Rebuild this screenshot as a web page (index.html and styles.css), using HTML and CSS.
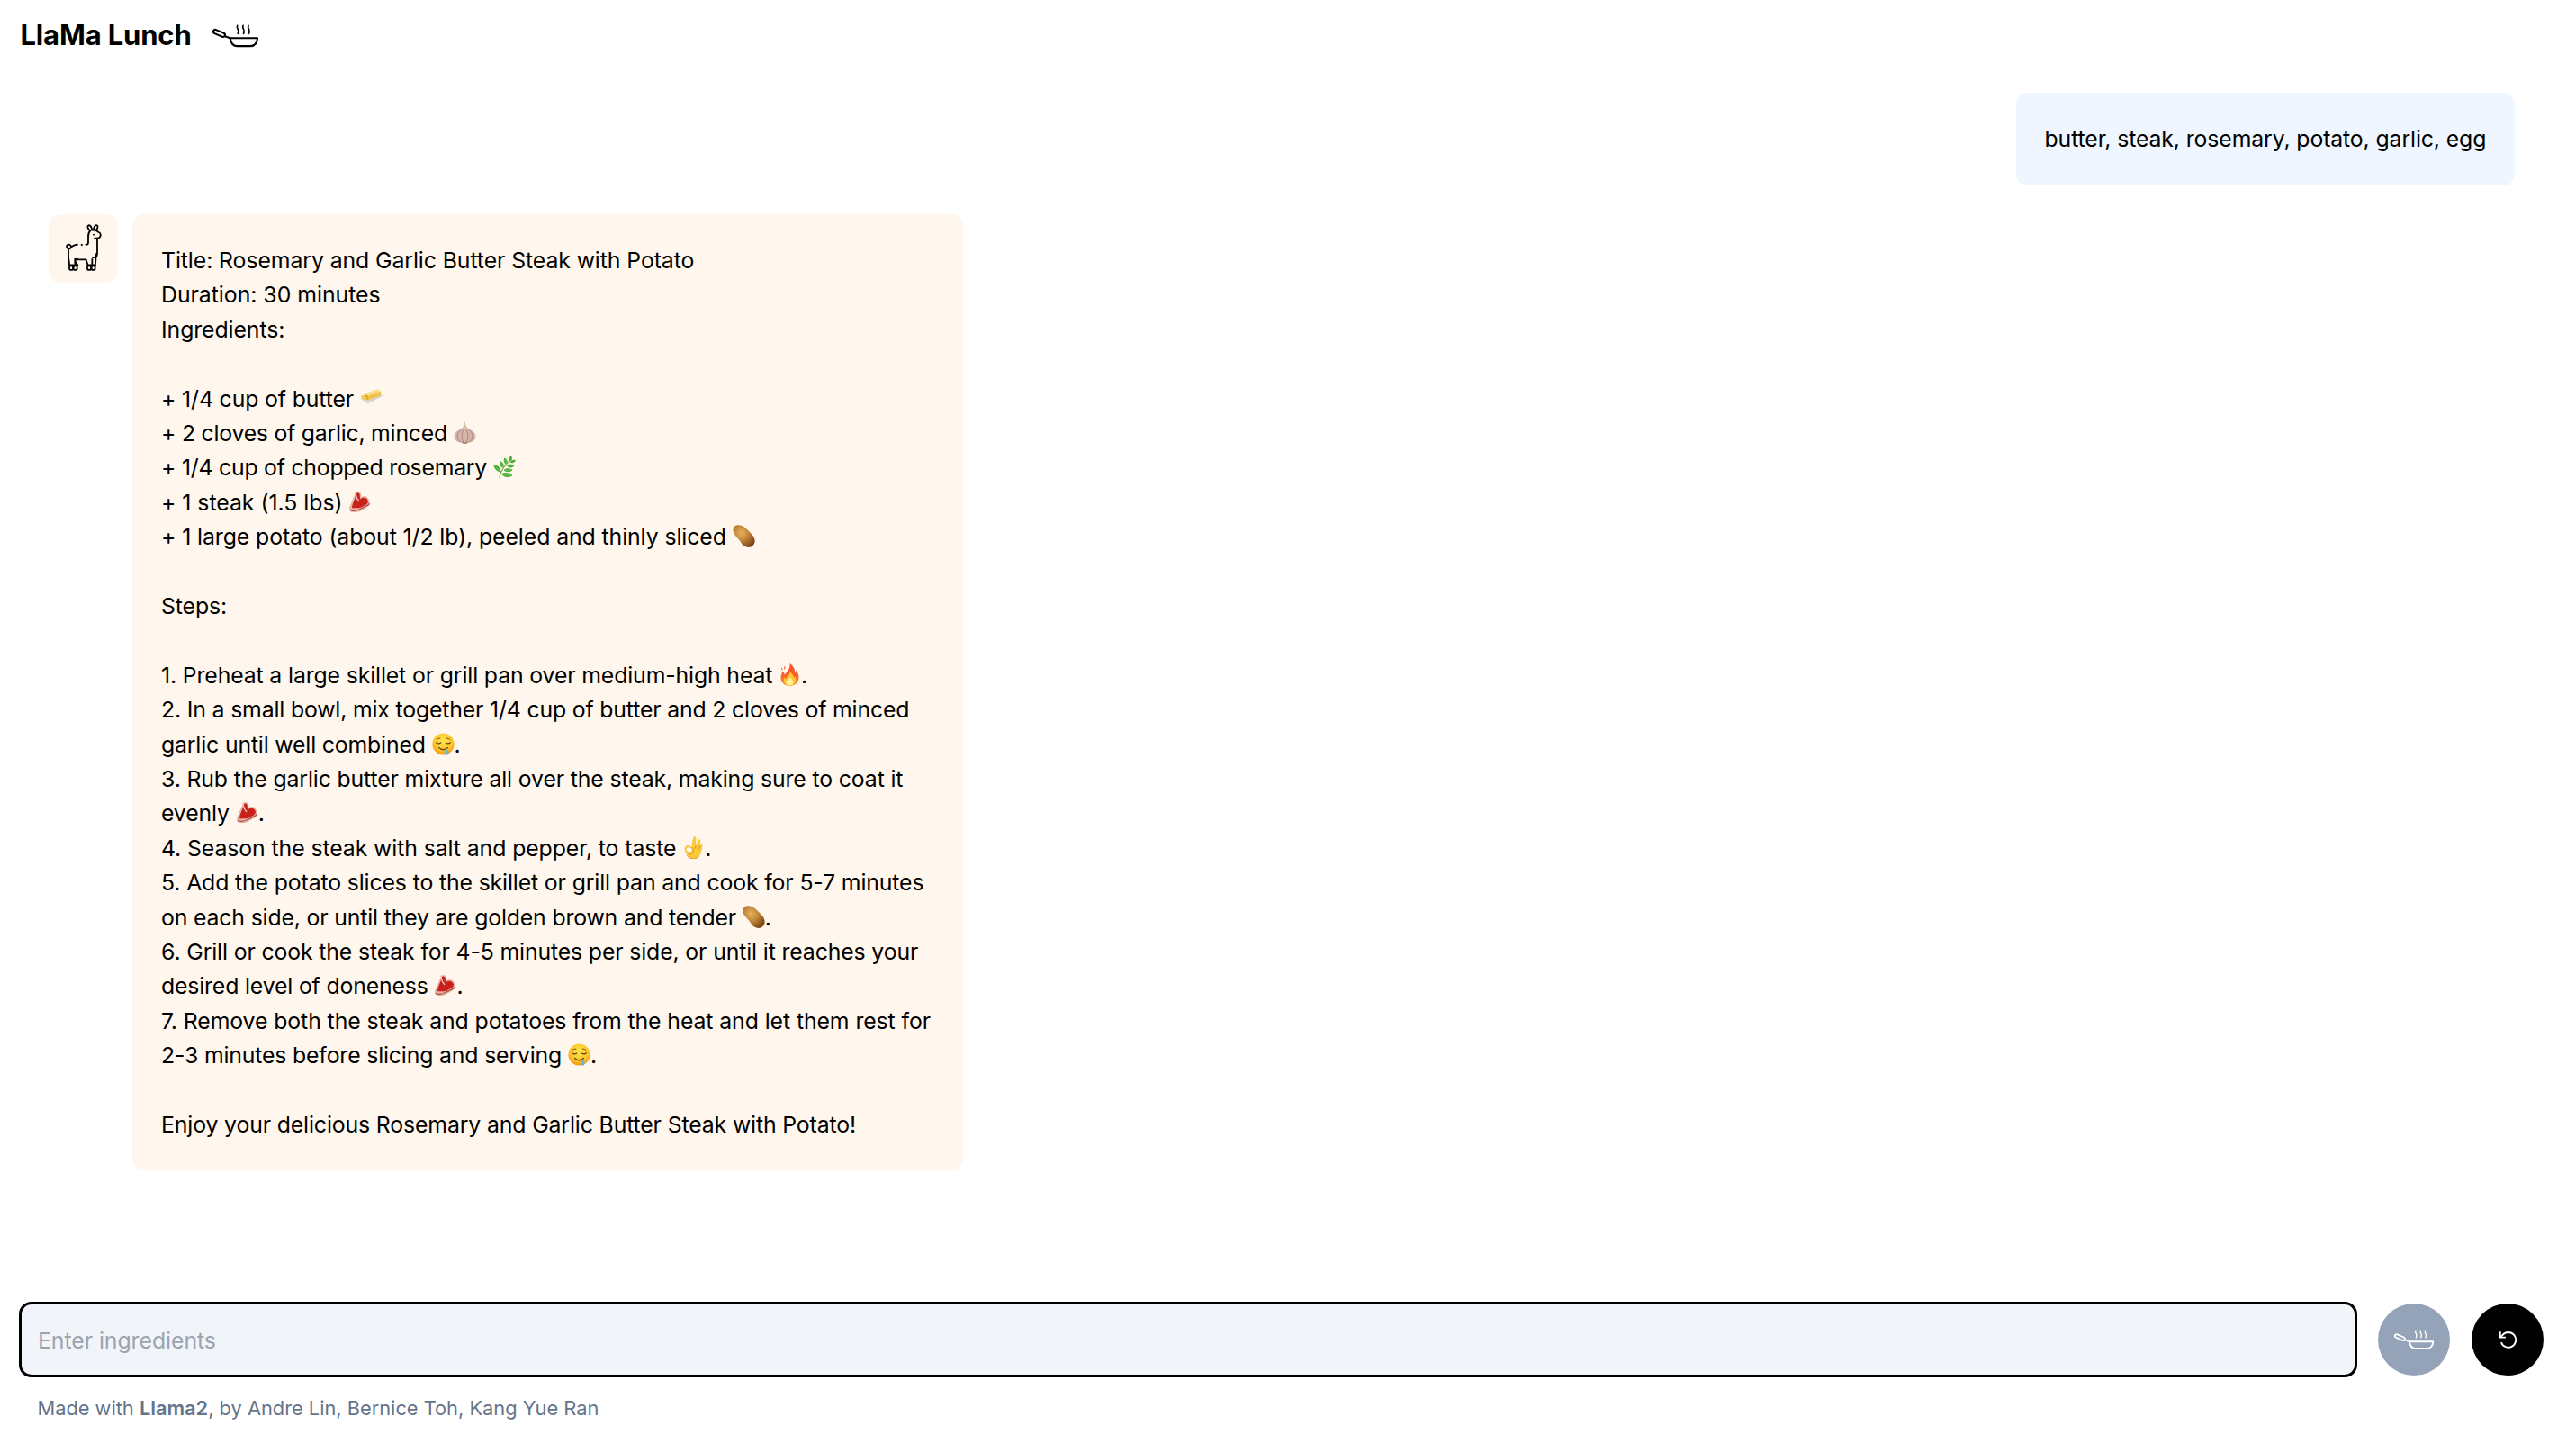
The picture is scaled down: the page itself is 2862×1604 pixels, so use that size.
FILE: index.html
```html
<!DOCTYPE html>
<html lang="en">
<head>
<meta charset="utf-8">
<title>LlaMa Lunch</title>
<link rel="stylesheet" href="styles.css">
</head>
<body>
<svg class="defs" aria-hidden="true">
  <symbol id="pan" viewBox="0 0 160 80">
    <g fill="none" stroke="currentColor" stroke-width="6.4" stroke-linecap="round" stroke-linejoin="round">
      <rect x="5" y="23.5" width="41" height="13" rx="6.5" transform="rotate(23 25.5 30)"/>
      <path d="M45 40 62 46"/>
      <path d="M62 46H154C154 62 144 73 130 73H85C72 73 65 62 62 46Z"/>
      <path stroke-width="5" d="M87 4C83 10 87 13 89 18S91 27 88 31M106 4C102 10 106 13 108 18S110 27 107 31M124 4C120 10 124 13 126 18S128 27 125 31"/>
    </g>
  </symbol>
  <symbol id="butter" viewBox="0 0 25 25">
    <path d="M0 12.500 19 5.500 25 9 8.500 17Z" fill="#d5dae4"/>
    <path d="M0 12.500 8.500 17 25 9V9.800L8.500 18Z" fill="#b9c0cf"/>
    <path d="M5 7.500 19.500 2.500 23 4.800V9.500L9 14.500 5 12.500Z" fill="#f0c14b"/>
    <path d="M5 7.500 19.500 2.500 23 4.800 9 9.800Z" fill="#fae08a"/>
    <path d="M5 7.500 9 9.800V14.500L5 12.500Z" fill="#e0a52f"/>
    <path d="M.8 9.800 4.500 8.800 7.800 11.500 6.500 14.500 2.500 13Z" fill="#f2c653"/>
  </symbol>
  <symbol id="garlic" viewBox="0 0 25 25">
    <path d="M12.500 0C13.200 4 14 6.200 16.500 8.200 20 10 24.400 12 24.400 17 24.400 21.500 20.500 23.500 16 23.700L14.500 24.800H10.500L9 23.700C4.500 23.500.6 21.500.6 17 .6 12 5 10 8.500 8.200 11 6.200 11.900 4 12.500 0Z" fill="#d5b6aa"/>
    <path d="M8.500 9C3 12.500 2.500 20 8 23.200M16.500 9C22 12.500 22.500 20 17 23.200M11 9.500C8.500 13 8.500 19.500 11 23.500M14 9.500C16.500 13 16.500 19.500 14 23.500" fill="none" stroke="#a9807a" stroke-width=".9"/>
    <path d="M12.500 1C13 5 13.800 7 15.500 8.500H9.500C11.300 7 12 5 12.500 1Z" fill="#d9c59c"/>
    <path d="M9 22.500Q12.500 24.500 16 22.500L14.500 24.800H10.500Z" fill="#9b7465"/>
  </symbol>
  <symbol id="herb" viewBox="0 0 25 25">
    <path d="M7 24.500C8 16 14 9 20.500 4" fill="none" stroke="#7db045" stroke-width="1.200" stroke-linecap="round"/>
    <g fill="#49ad3a">
      <path d="M18.500 6.500C16.500 3.500 18 1.500 20 0 21.500 2.500 21 5 18.500 6.500Z"/>
      <path d="M14.500 10C11 8 11.500 4.500 12.500 2.500 16 4 16.500 7 14.500 10Z"/>
      <path d="M11 14C7.500 12.500 6.500 9 7.500 6 11.500 7.500 12.500 10.500 11 14Z"/>
      <path d="M8.500 19C3.500 17.500.5 14 .5 10 5.500 10.500 8.500 14 8.500 19Z"/>
      <path d="M18.500 7.500C20.500 4.500 23 4.500 25 5 24 8 21.500 9 18.500 7.500Z"/>
      <path d="M15 11.500C17.500 8.800 21.500 9.500 23.500 11 21.500 14 18 14.300 15 11.500Z"/>
      <path d="M11.500 16C14.500 13.200 19 14 21.500 16 18.500 19 14.500 19 11.500 16Z"/>
      <path d="M9 20.500C13 17.800 18.500 19 21.500 22 17 25.300 12 24.500 9 20.500Z"/>
    </g>
    <path d="M2 11.500 8 18M8.500 8 11 13.500M13 4.500 14.500 9M11 21 19 22.200M13 16.200 19.500 16.200" stroke="#8bd464" stroke-width=".7"/>
  </symbol>
  <symbol id="steak" viewBox="0 0 25 25">
    <path d="M8.500 1.500C11 .3 13.500 1 14 3.500L14.500 7C18 4.500 22 6.500 23 10.500 24 12 24.500 14.500 23.300 16.500 20.500 19 17.500 20 14.500 22 11 24.500 5 24.800 2.500 23.300.8 22 .6 20 1.500 17.500Z" fill="#e9b3a8"/>
    <path d="M9.500 2.800C11.500 2 12.600 3 12.700 5L13 9.500C16 6.500 20.500 7.500 21.800 11 22.500 14.500 19 16 16 17.500 12 20.500 8 18.500 4.500 19.500 3 17.500 6.500 11 7.500 8 8 6 8.200 4 9.500 2.800Z" fill="#c9201a"/>
    <path d="M7.500 1.500 9.500 8.500 12 12" fill="none" stroke="#f3c9bf" stroke-width="1.300"/>
    <path d="M2 21.500C7 24 11 21.500 14 20 17.500 18 21 17 23.500 14.500" fill="none" stroke="#a8433a" stroke-width="1.100"/>
  </symbol>
  <symbol id="potato" viewBox="0 0 25 25">
    <defs>
      <radialGradient id="skin" cx=".38" cy=".35" r=".7"><stop offset="0" stop-color="#e6b25e"/><stop offset=".5" stop-color="#c08436"/><stop offset="1" stop-color="#7b4718"/></radialGradient>
    </defs>
    <path d="M2 1.800C5 -.8 10.500.3 14 3.300 17 6 19.500 8.500 22.500 12 26 17 25 22.500 20.500 24.500 16 26 11.500 23.500 9.500 20 7.500 16 3.500 13.500 1.300 9.500 0 6.500.2 3.500 2 1.800Z" fill="url(#skin)"/>
  </symbol>
  <symbol id="fire" viewBox="0 0 25 25">
    <defs>
      <linearGradient id="flame" x1="0" y1="0" x2="0" y2="1"><stop offset="0" stop-color="#f4502a"/><stop offset=".55" stop-color="#f8622a"/><stop offset="1" stop-color="#fb9a2c"/></linearGradient>
    </defs>
    <path d="M12.500 0C16 2.500 18.500 6 18.300 10.500 19.300 9.800 19.600 8.800 19.500 7.500 21.500 10 22.600 13 22.500 16 22.300 21.500 18 25 12.500 25S2.500 21.500 2.500 16C2.500 13 3.800 11 4.500 8.500 5.800 9.500 6.500 11 6.800 12.500 9.500 9 13.500 5.500 12.500 0Z" fill="url(#flame)"/>
    <path d="M13 8.500C14 11.500 17 13 17.200 16 18 15.500 18.300 15 18.500 14.200 21 20 17.500 24.500 12.500 24.500S4.500 20.500 6.300 15.500C7 16.500 7.500 17 8.300 17.500 9 14 13 12.500 13 8.500Z" fill="#ffc62e"/>
    <path d="M12.800 14.500C13.500 17 16.500 18.500 16.300 21.300 16 23.500 14.500 24.500 12.500 24.500S8.500 23.300 8.500 21C8.800 18.500 12.500 17.500 12.800 14.500Z" fill="#fff3a0"/>
    <path d="M3.500 5.500 4 7M7 3.500 6.500 6" stroke="#f4502a" stroke-linecap="round"/>
  </symbol>
  <symbol id="drool" viewBox="0 0 25 25">
    <defs>
      <radialGradient id="face" cx=".5" cy=".35" r=".65"><stop offset="0" stop-color="#ffe54d"/><stop offset=".65" stop-color="#fdc62c"/><stop offset="1" stop-color="#ee9412"/></radialGradient>
    </defs>
    <circle cx="12.500" cy="12.500" r="12.100" fill="url(#face)"/>
    <g fill="none" stroke="#704214" stroke-width="1.200" stroke-linecap="round">
      <path d="M4.500 10.800Q7 13 9.800 11M15.200 11Q18 13 20.500 10.800"/>
      <path d="M5 7.500Q6.500 5.800 8.800 6M16.200 6Q18.500 5.800 20 7.500" stroke-width=".9"/>
      <path d="M7.500 16.500Q12.500 21 17.500 16.500"/>
    </g>
    <path d="M15.500 18.500C18 19 18.500 20.500 18.500 22.500 18.500 25.500 14.500 25.500 14.700 22.500 14.800 21 15.500 20 15.500 18.500Z" fill="#62b9e6"/>
  </symbol>
  <symbol id="okay" viewBox="0 0 25 25">
    <path d="M10.500 12.500C11 8 10.800 4 12.500 1 13.500-.3 15.300.2 15.400 2 15.500 4 14.800 8 15.200 10.500L17.500 4C18.500 2.500 20.500 3 20.400 5L19.500 11 20.500 8.500C21.500 7.500 22.500 8.300 22.400 9.500 22 14 21.500 19 18.500 22.500 15 26 8.500 25.500 5.500 21.500L3 16C1.800 13.500 3 10.500 6 10 8 9.800 9.500 11 10.500 12.500Z" fill="#fcc83c"/>
    <ellipse cx="7.700" cy="14.800" rx="3.100" ry="2.500" fill="#fff7ed" transform="rotate(20 7.700 14.800)"/>
    <path d="M15.200 10.500 14.300 13M19.500 11 18 15M10.500 12.500C13.500 14 13 18 10 19.500 8 20.300 6.500 19.500 5.500 18.300M5.500 21.500C8.500 25.500 15 26 18.500 22.500" fill="none" stroke="#d98e1c" stroke-width=".9" stroke-linecap="round"/>
  </symbol>
</svg>

<header class="header">
  <h1>LlaMa Lunch</h1>
  <svg class="pan-logo"><use href="#pan"/></svg>
</header>

<main class="chat">
  <div class="bubble user">butter, steak, rosemary, potato, garlic, egg</div>
  <div class="reply">
    <div class="avatar">
      <svg class="llama" viewBox="0 0 120 160" fill="none" stroke="#000" stroke-width="5.400" stroke-linecap="round" stroke-linejoin="round">
        <path d="M82 21C73 18 71 6 76 4 82 2 87 11 87 19M93 19C93 9 99 2 104 4 109 7 106 17 99 21"/>
        <path d="M82 21C76 27 75 34 75 42V60C75 65 74 68 71 68H67M87 20C97 18 105 23 110 27 115 29 117 33 116 38 115 44 111 47 105 47H96M105 48V98C105 104 103 108 99 112"/>
        <path d="M54 69H53M39 68C30 69 21 72 16 80 10 84 3 81 3 75 3 69 9 66 14 69 18 71 18 75 17 79M9 84V108C9 118 12 124 12 134"/>
        <path d="M31 118C36 116 40 114 40 118M31 116V134M31 118H68M68 118C68 125 73 128 73 136M31 117C27 126 39 126 38 138M88 117V134M101 108C99 118 101 126 98 136M90 112C96 112 102 106 103 98"/>
        <path d="M12 136H40M73 136H99"/>
        <rect x="12" y="139" width="12" height="14" rx="5"/><rect x="26" y="139" width="12" height="14" rx="5"/>
        <rect x="72" y="139" width="12" height="14" rx="5"/><rect x="86" y="139" width="12" height="14" rx="5"/>
        <path d="M93 35h.1"/>
      </svg>
    </div>
    <div class="bubble bot">
      <p class="t1">Title: Rosemary and Garlic Butter Steak with Potato</p>
      <p class="t0">Duration: 30 minutes</p>
      <p class="t1">Ingredients:</p>
      <p></p>
      <p class="t2">+ 1/4 cup of butter <svg class="emoji"><use href="#butter"/></svg></p>
      <p class="t4">+ 2 cloves of garlic, minced <svg class="emoji"><use href="#garlic"/></svg></p>
      <p class="t4">+ 1/4 cup of chopped rosemary <svg class="emoji"><use href="#herb"/></svg></p>
      <p class="t0">+ 1 steak (1.5 lbs) <svg class="emoji"><use href="#steak"/></svg></p>
      <p class="t1">+ 1 large potato (about 1/2 lb), peeled and thinly sliced <svg class="emoji"><use href="#potato"/></svg></p>
      <p></p>
      <p class="t1">Steps:</p>
      <p></p>
      <p class="t2">1. Preheat a large skillet or grill pan over medium-high heat <svg class="emoji"><use href="#fire"/></svg>.</p>
      <p class="t3">2. In a small bowl, mix together 1/4 cup of butter and 2 cloves of minced<br>garlic until well combined <svg class="emoji"><use href="#drool"/></svg>.</p>
      <p class="t2">3. Rub the garlic butter mixture all over the steak, making sure to coat it<br>evenly <svg class="emoji"><use href="#steak"/></svg>.</p>
      <p class="t1">4. Season the steak with salt and pepper, to taste <svg class="emoji"><use href="#okay"/></svg>.</p>
      <p class="t2">5. Add the potato slices to the skillet or grill pan and cook for 5-7 minutes<br><span class="t3">on each side, or until they are golden brown and tender</span> <svg class="emoji"><use href="#potato"/></svg>.</p>
      <p class="t2">6. Grill or cook the steak for 4-5 minutes per side, or until it reaches your<br><span class="t3">desired level of doneness</span> <svg class="emoji"><use href="#steak"/></svg>.</p>
      <p class="t1">7. Remove both the steak and potatoes from the heat and let them rest for<br><span class="t3">2-3 minutes before slicing and serving</span> <svg class="emoji"><use href="#drool"/></svg>.</p>
      <p></p>
      <p class="t2">Enjoy your delicious Rosemary and Garlic Butter Steak with Potato!</p>
    </div>
  </div>
</main>

<footer class="footer">
  <form class="composer">
    <input class="field" type="text" placeholder="Enter ingredients">
    <button class="round send" type="button" aria-label="Cook"><svg class="pan-send"><use href="#pan"/></svg></button>
    <button class="round reset" type="button" aria-label="Start over">
      <svg class="reset-icon" viewBox="0 0 64 64" fill="none" stroke="#fff" stroke-width="5.600">
        <path d="M9 40A25.500 25.500 0 1 0 13 16L6 23"/><path d="M5.500 4V23H24"/>
      </svg>
    </button>
  </form>
  <p class="credit">Made with <b>Llama2</b>, by Andre Lin, Bernice Toh, Kang Yue Ran</p>
</footer>
</body>
</html>
```
FILE: styles.css
```css
* { box-sizing: border-box; }

body {
  margin: 0;
  height: 1604px;
  display: flex;
  flex-direction: column;
  overflow: hidden;
  background: #fff;
  color: #000;
  font-family: Inter, "Liberation Sans", sans-serif;
  font-size: 24.8px;
  line-height: 38.4px;
}

p, h1 { margin: 0; }

.defs { position: absolute; width: 0; height: 0; }

.header {
  display: flex;
  align-items: center;
  height: 79px;
  padding-left: 22.500px;
}

.header h1 {
  width: 212px;
  font-size: 31px;
  font-weight: 700;
  letter-spacing: -0.16px;
  white-space: nowrap;
}

.pan-logo { width: 53px; height: 26.500px; margin-top: 1px; }

.chat {
  flex: 1;
  display: flex;
  flex-direction: column;
  gap: 32px;
  padding: 24px 68.500px 0 54px;
}

.bubble { padding: 32px; border-radius: 12.800px; }

.user {
  align-self: flex-end;
  width: 554px;
  height: 103px;
  background: #eff6ff;
  letter-spacing: -0.11px;
  white-space: nowrap;
}

.reply { display: flex; align-items: flex-start; gap: 16px; }

.avatar {
  display: flex;
  align-items: center;
  justify-content: center;
  width: 77px;
  height: 76px;
  border-radius: 12.800px;
  background: #fff7ed;
}

.llama { width: 40px; height: 53.300px; }

.bot { width: 922.500px; height: 1062px; background: #fff7ed; }
.bot p { min-height: 38.4px; white-space: nowrap; }

.t0 { letter-spacing: -0.02px; }
.t1 { letter-spacing: -0.085px; }
.t2 { letter-spacing: -0.13px; }
.t3 { letter-spacing: -0.16px; }
.t4 { letter-spacing: -0.23px; }

.emoji {
  display: inline-block;
  width: 25px;
  height: 25px;
  vertical-align: -3px;
}

.footer { height: 158px; padding: 0 36px 0 21px; }

.composer { display: flex; align-items: center; height: 84px; gap: 24px; }

.field {
  flex: 1;
  height: 83.200px;
  margin-right: -1px;
  padding: 1px 0 0 18px;
  border: 3.200px solid #000;
  border-radius: 14px;
  outline: none;
  background: #f1f5f9;
  font: inherit;
  letter-spacing: -0.05px;
}
.field::placeholder { color: #9ca3af; opacity: 1; }

.round {
  display: flex;
  align-items: center;
  justify-content: center;
  width: 80px;
  height: 80px;
  padding: 0;
  border: 0;
  border-radius: 50%;
}
.send { background: #94a3b8; color: #fff; }
.reset { background: #000; }
.pan-send { width: 46px; height: 23px; }
.reset-icon { width: 21px; height: 21px; }

.credit {
  padding: 14.500px 0 0 20.500px;
  color: #64748b;
  font-size: 21.800px;
}
.credit b { font-weight: 600; }
```
